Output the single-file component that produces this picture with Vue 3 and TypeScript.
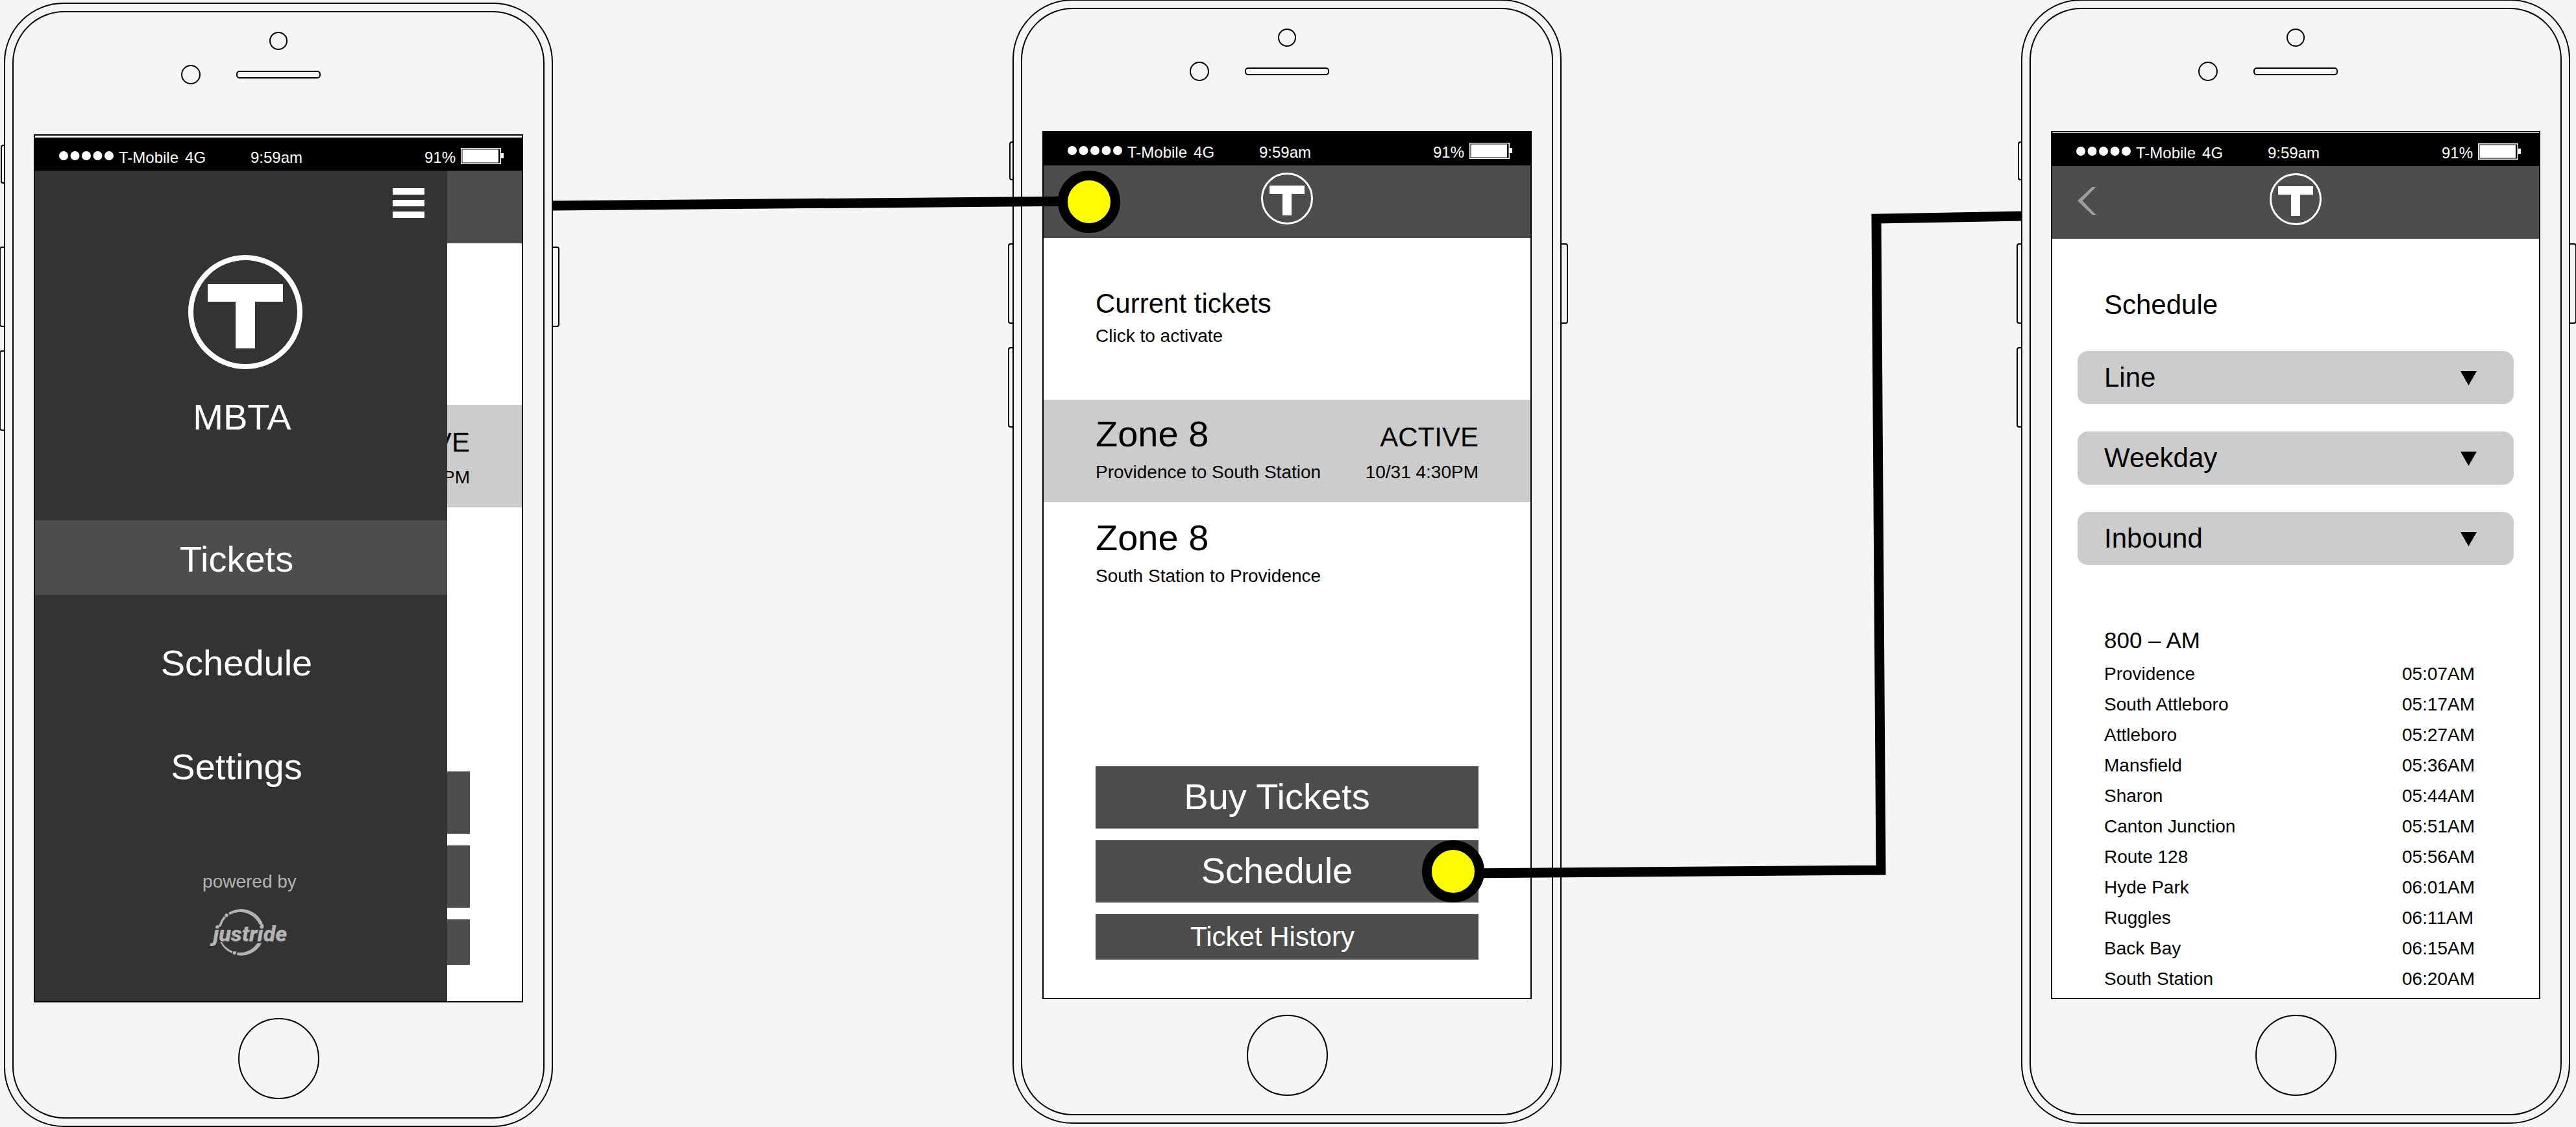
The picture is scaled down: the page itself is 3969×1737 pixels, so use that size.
<script setup lang="ts">
import { ref } from 'vue'

type Screen = 'menu' | 'tickets' | 'schedule'

interface Ticket {
  zone: string
  route: string
  status?: string
  expires?: string
}

interface Picker {
  id: string
  value: string
  options: string[]
}

const screens: Screen[] = ['menu', 'tickets', 'schedule']

const navItems = ['Tickets', 'Schedule', 'Settings']
const activeNav = ref('Tickets')

const tickets: Ticket[] = [
  { zone: 'Zone 8', route: 'Providence to South Station', status: 'ACTIVE', expires: '10/31 4:30PM' },
  { zone: 'Zone 8', route: 'South Station to Providence' },
]

const pickers = ref<Picker[]>([
  { id: 'line', value: 'Line', options: ['Line'] },
  { id: 'day', value: 'Weekday', options: ['Weekday', 'Weekend'] },
  { id: 'direction', value: 'Inbound', options: ['Inbound', 'Outbound'] },
])

const stops: [string, string][] = [
  ['Providence', '05:07AM'],
  ['South Attleboro', '05:17AM'],
  ['Attleboro', '05:27AM'],
  ['Mansfield', '05:36AM'],
  ['Sharon', '05:44AM'],
  ['Canton Junction', '05:51AM'],
  ['Route 128', '05:56AM'],
  ['Hyde Park', '06:01AM'],
  ['Ruggles', '06:11AM'],
  ['Back Bay', '06:15AM'],
  ['South Station', '06:20AM'],
]
</script>

<template>
  <main class="stage">
    <section v-for="screen in screens" :key="screen" class="phone" :class="`phone-${screen}`">
      <span class="key key-mute"></span>
      <span class="key key-up"></span>
      <span class="key key-down"></span>
      <span class="key key-power"></span>

      <div class="face">
        <span class="camera"></span>
        <div class="earpiece">
          <span class="sensor"></span>
          <span class="speaker"></span>
        </div>

        <div class="display">
          <div class="status">
            <div class="carrier">
              <svg class="signal" width="84" height="14" viewBox="0 0 84 14" aria-hidden="true">
                <circle v-for="n in 5" :key="n" :cx="7 + (n - 1) * 17.5" cy="7" r="7" fill="#fff" />
              </svg>
              <span>T-Mobile</span>
              <span class="network">4G</span>
            </div>
            <span>9:59am</span>
            <div class="power">
              <span>91%</span>
              <svg class="battery" width="66" height="25" viewBox="0 0 66 25" aria-hidden="true">
                <rect x="0.75" y="0.75" width="60.5" height="23.5" fill="none" stroke="#fff" stroke-width="1.5" />
                <rect x="2.5" y="2.5" width="55.5" height="20" fill="#fff" />
                <rect x="62" y="8" width="4" height="8" fill="#fff" />
              </svg>
            </div>
          </div>

          <div class="content">
            <header class="bar">
              <button v-if="screen === 'schedule'" class="back" type="button" aria-label="Back">
                <svg width="29" height="43" viewBox="0 0 29 43">
                  <path d="M22.500 0H28.500L7.500 21.500L28.500 43H22.500L0 21.500Z" fill="#9aa0a1" />
                </svg>
              </button>
              <svg class="logo" width="80" height="80" viewBox="0 0 80 80" role="img" aria-label="MBTA">
                <circle cx="40" cy="40" r="38.500" fill="none" stroke="#fff" stroke-width="3" />
                <rect x="13" y="20" width="54" height="13" fill="#fff" />
                <rect x="33" y="20" width="14" height="46" fill="#fff" />
              </svg>
            </header>

            <template v-if="screen !== 'schedule'">
              <div class="intro">
                <h2>Current tickets</h2>
                <p>Click to activate</p>
              </div>
              <ul class="tickets">
                <li v-for="ticket in tickets" :key="ticket.route" :class="{ active: ticket.status }">
                  <div class="ticket-line zone">
                    <span class="covered">{{ ticket.zone }}</span>
                    <span class="state">{{ ticket.status }}</span>
                  </div>
                  <div class="ticket-line route">
                    <span class="covered">{{ ticket.route }}</span>
                    <span>{{ ticket.expires }}</span>
                  </div>
                </li>
              </ul>
              <div class="actions">
                <button type="button"><span class="covered">Buy Tickets</span></button>
                <button type="button"><span class="covered">Schedule</span></button>
                <button type="button" class="minor"><span class="covered">Ticket History</span></button>
              </div>
            </template>

            <template v-else>
              <h2 class="title">Schedule</h2>
              <div class="pickers">
                <div v-for="picker in pickers" :key="picker.id" class="picker">
                  <select :id="picker.id" v-model="picker.value" :aria-label="picker.id">
                    <option v-for="option in picker.options" :key="option">{{ option }}</option>
                  </select>
                  <svg class="arrow" width="25" height="22" viewBox="0 0 25 22" aria-hidden="true">
                    <path d="M0 0H25L12.500 22Z" />
                  </svg>
                </div>
              </div>
              <table class="timetable">
                <caption>800 – AM</caption>
                <tbody>
                  <tr v-for="[stop, time] in stops" :key="stop">
                    <td>{{ stop }}</td>
                    <td class="time">{{ time }}</td>
                  </tr>
                </tbody>
              </table>
            </template>

            <aside v-if="screen === 'menu'" class="drawer">
              <button class="burger" type="button" aria-label="Menu">
                <span></span>
                <span></span>
                <span></span>
              </button>
              <div class="brand">
                <svg width="176" height="176" viewBox="0 0 176 176" aria-hidden="true">
                  <circle cx="88" cy="88" r="84" fill="none" stroke="#fff" stroke-width="8" />
                  <rect x="30" y="45" width="116" height="27" fill="#fff" />
                  <rect x="73" y="45" width="30" height="99" fill="#fff" />
                </svg>
                <span class="brand-name">MBTA</span>
              </div>
              <nav class="nav">
                <a
                  v-for="item in navItems"
                  :key="item"
                  href="#"
                  :class="{ current: item === activeNav }"
                  @click.prevent="activeNav = item"
                >{{ item }}</a>
              </nav>
              <footer class="credit">
                <span>powered by</span>
                <svg class="justride" width="132" height="74" viewBox="60 240 396 222" role="img" aria-label="justride">
                  <g fill="#b3b3b3">
                    <path d="M114 324A107 107 0 0 1 139 276L147 283A97 97 0 0 0 125 324Z" />
                    <circle cx="150" cy="272" r="8" />
                    <path d="M159 261A107 107 0 0 1 317 310L303 317A99 99 0 0 0 164 270Z" />
                    <circle cx="314" cy="320" r="8" />
                    <path d="M121 395A107 107 0 0 0 175 448L178 438A102 102 0 0 1 128 395Z" />
                    <circle cx="187" cy="446" r="8" />
                    <path d="M198 456A107 107 0 0 0 312 402L293 400A96 96 0 0 1 200 444Z" />
                    <text class="wordmark" x="88" y="392">justride</text>
                  </g>
                </svg>
              </footer>
            </aside>
          </div>
        </div>

        <span class="home"></span>
      </div>
    </section>

    <svg class="flows" viewBox="0 0 3969 1737" preserveAspectRatio="xMidYMin meet" aria-hidden="true">
      <g fill="none" stroke="#000" stroke-width="15">
        <path d="M852 317L1660 310" />
        <path d="M2260 1346L2898 1341L2891 337L3114 333" />
      </g>
      <g fill="#fffb00" stroke="#000" stroke-width="15">
        <circle cx="1678" cy="311" r="40.500" />
        <circle cx="2239" cy="1343" r="40.500" />
      </g>
    </svg>
  </main>
</template>

<style>
body {
  margin: 0;
  background: #f5f5f3;
}
</style>

<style scoped>
.stage {
  position: relative;
  display: flex;
  justify-content: space-between;
  align-items: flex-start;
  box-sizing: border-box;
  min-height: 100vh;
  padding: 0 9px 0 6px;
  overflow: hidden;
  background: #f5f5f3;
  color: #000;
  font-family: "Liberation Sans", Arial, Helvetica, sans-serif;
  font-size: 28px;
  line-height: 32px;
}

.stage *,
.stage *::before {
  box-sizing: border-box;
}

h2,
p,
ul {
  margin: 0;
  padding: 0;
  font-weight: 400;
  list-style: none;
}

button {
  padding: 0;
  border: 0;
  background: none;
  color: inherit;
  font: inherit;
  cursor: pointer;
}

/* Handset outline */
.phone {
  position: relative;
  flex: none;
  width: 846px;
  margin-top: -1px;
  padding: 11px;
  border: 2px solid #000;
  border-radius: 92px;
}

.phone-menu {
  margin-top: 4px;
}

.key {
  position: absolute;
  left: -9px;
  width: 9px;
  height: 124px;
  border: 2px solid #000;
  border-right: 0;
  border-radius: 4px 0 0 4px;
}

.key-mute {
  top: 217px;
  left: -7px;
  width: 7px;
  height: 60px;
}

.key-up {
  top: 374px;
}

.key-down {
  top: 534px;
}

.key-power {
  top: 374px;
  right: -12px;
  left: auto;
  width: 12px;
  border-right: 2px solid #000;
  border-left: 0;
  border-radius: 0 4px 4px 0;
}

.face {
  display: flex;
  flex-direction: column;
  align-items: center;
  padding: 30px 0 28px;
  border: 2px solid #000;
  border-radius: 80px;
}

.camera {
  width: 28px;
  height: 28px;
  border: 2px solid #000;
  border-radius: 50%;
}

.earpiece {
  display: grid;
  grid-template-columns: 1fr 130px 1fr;
  align-items: center;
  align-self: stretch;
  margin: 23px 0 77px;
}

.sensor {
  justify-self: end;
  width: 30px;
  height: 30px;
  margin-right: 55px;
  border: 2px solid #000;
  border-radius: 50%;
}

.speaker {
  height: 12px;
  border: 2px solid #000;
  border-radius: 5px;
}

.home {
  width: 125px;
  height: 125px;
  margin-top: 24px;
  border: 2px solid #000;
  border-radius: 50%;
}

.display {
  display: flex;
  flex-direction: column;
  width: 754px;
  height: 1338px;
  border: 2px solid #000;
  background: #fff;
  overflow: hidden;
}

.phone-menu .display {
  padding-top: 3px;
}

.phone-schedule .display {
  padding-top: 1px;
}

/* Status bar */
.status {
  display: grid;
  grid-template-columns: 295px 1fr auto;
  align-items: center;
  height: 51px;
  padding: 10px 28px 0 37px;
  background: #000;
  color: #fff;
  font-size: 24px;
  line-height: 28px;
}

.carrier,
.power {
  display: flex;
  align-items: center;
  gap: 8px;
}

.network {
  margin-left: 2px;
}

.signal,
.battery {
  margin-bottom: 5px;
}

/* App content */
.content {
  position: relative;
  flex: 1;
}

.bar {
  position: relative;
  display: flex;
  justify-content: center;
  height: 112px;
  padding-top: 11px;
  background: #4d4d4d;
}

.back {
  position: absolute;
  top: 32px;
  left: 39px;
  line-height: 0;
}

.intro {
  height: 249px;
  padding: 77px 80px 0;
}

h2 {
  font-size: 42px;
  line-height: 48px;
}

.intro p {
  margin-top: 10px;
}

.tickets {
  display: grid;
  gap: 2px;
}

.tickets li {
  height: 158px;
  padding: 21px 80px 0;
}

.tickets .active {
  background: #ccc;
}

.ticket-line {
  display: flex;
  justify-content: space-between;
  align-items: baseline;
}

.zone {
  font-size: 56px;
  line-height: 64px;
}

.state {
  font-size: 42px;
  line-height: 48px;
}

.route {
  margin-top: 11px;
}

.actions {
  display: grid;
  gap: 18px;
  margin: 247px 80px 0;
}

.actions button {
  height: 96px;
  padding: 0 31px 2px 0;
  background: #4d4d4d;
  color: #fff;
  font-size: 56px;
  line-height: 64px;
}

.actions .minor {
  height: 70px;
  padding: 0 45px 0 0;
  font-size: 42px;
  line-height: 48px;
}

/* Schedule */
.title {
  margin: 78px 80px 47px;
}

.pickers {
  display: grid;
  gap: 42px;
  margin: 0 39px;
}

.picker {
  position: relative;
}

.picker select {
  display: block;
  width: 100%;
  height: 82px;
  padding: 0 80px 0 41px;
  border: 0;
  border-radius: 16px;
  appearance: none;
  background: #ccc;
  color: #000;
  font: inherit;
  font-size: 42px;
  line-height: 56px;
}

.arrow {
  position: absolute;
  top: 31px;
  right: 57px;
  pointer-events: none;
}

.timetable {
  width: 573px;
  margin: 96px 0 0 80px;
  border-collapse: collapse;
  line-height: 47px;
}

.timetable caption {
  padding-bottom: 8px;
  font-size: 35px;
  line-height: 40px;
  text-align: left;
}

.timetable td {
  height: 47px;
  padding: 0;
}

.timetable .time {
  width: 114px;
}

/* Slide-in drawer */
.phone-menu .intro,
.phone-menu .covered {
  visibility: hidden;
}

.drawer {
  position: absolute;
  top: 0;
  bottom: 0;
  left: 0;
  display: flex;
  flex-direction: column;
  width: 635px;
  background: #333;
  color: #fff;
}

.burger {
  display: grid;
  gap: 8px;
  align-self: flex-end;
  width: 49px;
  margin: 27px 35px 57px 0;
}

.burger span {
  height: 10px;
  background: #fff;
}

.brand {
  display: flex;
  flex-direction: column;
  align-items: center;
  gap: 42px;
  padding-left: 13px;
  font-size: 56px;
  line-height: 64px;
}

.brand-name {
  padding-right: 10px;
}

.nav {
  display: grid;
  gap: 45px;
  margin: 127px 0 106px;
}

.nav a {
  height: 115px;
  padding: 28px 14px 0 0;
  color: inherit;
  font-size: 56px;
  line-height: 64px;
  text-align: center;
  text-decoration: none;
}

.nav .current {
  background: #4d4d4d;
}

.credit {
  display: flex;
  flex-direction: column;
  align-items: center;
  gap: 25px;
  padding-left: 26px;
  color: #b3b3b3;
}

.justride {
  overflow: visible;
}

.wordmark {
  font-family: Roboto, "Liberation Sans", sans-serif;
  font-size: 102px;
  font-style: italic;
  font-weight: 900;
}

/* Flow connectors between the handsets */
.flows {
  position: absolute;
  top: 0;
  left: 0;
  width: 100%;
  pointer-events: none;
}
</style>
